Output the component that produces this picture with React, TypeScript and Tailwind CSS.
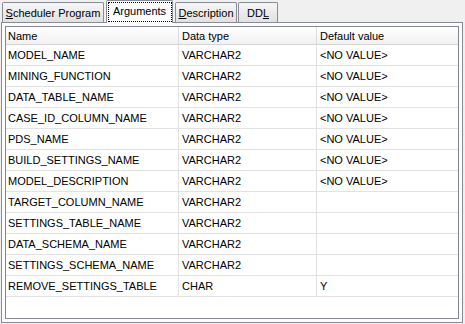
import React from "react";

const rows: [string, string, string][] = [
  ["MODEL_NAME", "VARCHAR2", "<NO VALUE>"],
  ["MINING_FUNCTION", "VARCHAR2", "<NO VALUE>"],
  ["DATA_TABLE_NAME", "VARCHAR2", "<NO VALUE>"],
  ["CASE_ID_COLUMN_NAME", "VARCHAR2", "<NO VALUE>"],
  ["PDS_NAME", "VARCHAR2", "<NO VALUE>"],
  ["BUILD_SETTINGS_NAME", "VARCHAR2", "<NO VALUE>"],
  ["MODEL_DESCRIPTION", "VARCHAR2", "<NO VALUE>"],
  ["TARGET_COLUMN_NAME", "VARCHAR2", ""],
  ["SETTINGS_TABLE_NAME", "VARCHAR2", ""],
  ["DATA_SCHEMA_NAME", "VARCHAR2", ""],
  ["SETTINGS_SCHEMA_NAME", "VARCHAR2", ""],
  ["REMOVE_SETTINGS_TABLE", "CHAR", "Y"],
];

function InactiveTab({ children, w, ml }: { children: React.ReactNode; w: string; ml: string }) {
  return (
    <div
      className={`${w} ${ml} h-[20px] border border-b-0 border-[#898c95] rounded-t-[2px] bg-gradient-to-b from-[#f6f6f6] to-[#e1e1e1] flex items-center justify-center leading-none`}
    >
      {children}
    </div>
  );
}

export default function App() {
  return (
    <div className="w-[465px] h-[324px] bg-[#f0f0f0] text-[11px] text-black overflow-hidden font-['Liberation_Sans',Arial,sans-serif]">
      <div className="flex items-end h-[22px] pl-[2px] relative z-10">
        <InactiveTab w="w-[102px]" ml="ml-0">
          <span className="pt-[1px]">
            <span className="underline">S</span>cheduler Program
          </span>
        </InactiveTab>
        <div className="relative w-[67px] ml-[2px] h-[23px] -mb-px border border-b-0 border-[#898c95] rounded-t-[2px] bg-[#fcfcfc] flex items-center justify-center leading-none">
          <div className="absolute left-[1px] right-0 top-[1px] bottom-[1px] border border-dotted border-black" />
          <span className="relative -mt-[1px]">Arguments</span>
        </div>
        <InactiveTab w="w-[62px]" ml="ml-[2px]">
          <span className="pt-[1px]">
            <span className="underline">D</span>escription
          </span>
        </InactiveTab>
        <InactiveTab w="w-[40px]" ml="ml-[1px]">
          <span className="pt-[1px]">
            DD<span className="underline">L</span>
          </span>
        </InactiveTab>
      </div>
      <div className="ml-[1px] w-[462px] h-[301px] border border-[#898c95] bg-[#fcfcfc] p-[3px]">
        <div className="h-full border border-[#828790] bg-white flex flex-col">
          <div className="flex h-[18px] border-b border-[#d5d5d5] bg-gradient-to-b from-[#ffffff] to-[#f1f1f1] leading-none">
            <div className="w-[173px] border-r border-[#dcdcdc] pl-[2px] pt-[2px] flex items-center">Name</div>
            <div className="w-[138px] border-r border-[#dcdcdc] pl-[3px] pt-[2px] flex items-center">Data type</div>
            <div className="flex-1 pl-[3px] pt-[2px] flex items-center">Default value</div>
          </div>
          {rows.map(([a, b, c]) => (
            <div key={a} className="flex h-[21px] border-b border-[#e2e2e2] leading-none">
              <div className="w-[173px] border-r border-[#e2e2e2] pl-[2px] pt-[1px] flex items-center">{a}</div>
              <div className="w-[138px] border-r border-[#e2e2e2] pl-[3px] pt-[1px] flex items-center">{b}</div>
              <div className="flex-1 pl-[3px] pt-[1px] flex items-center">{c}</div>
            </div>
          ))}
        </div>
      </div>
    </div>
  );
}
